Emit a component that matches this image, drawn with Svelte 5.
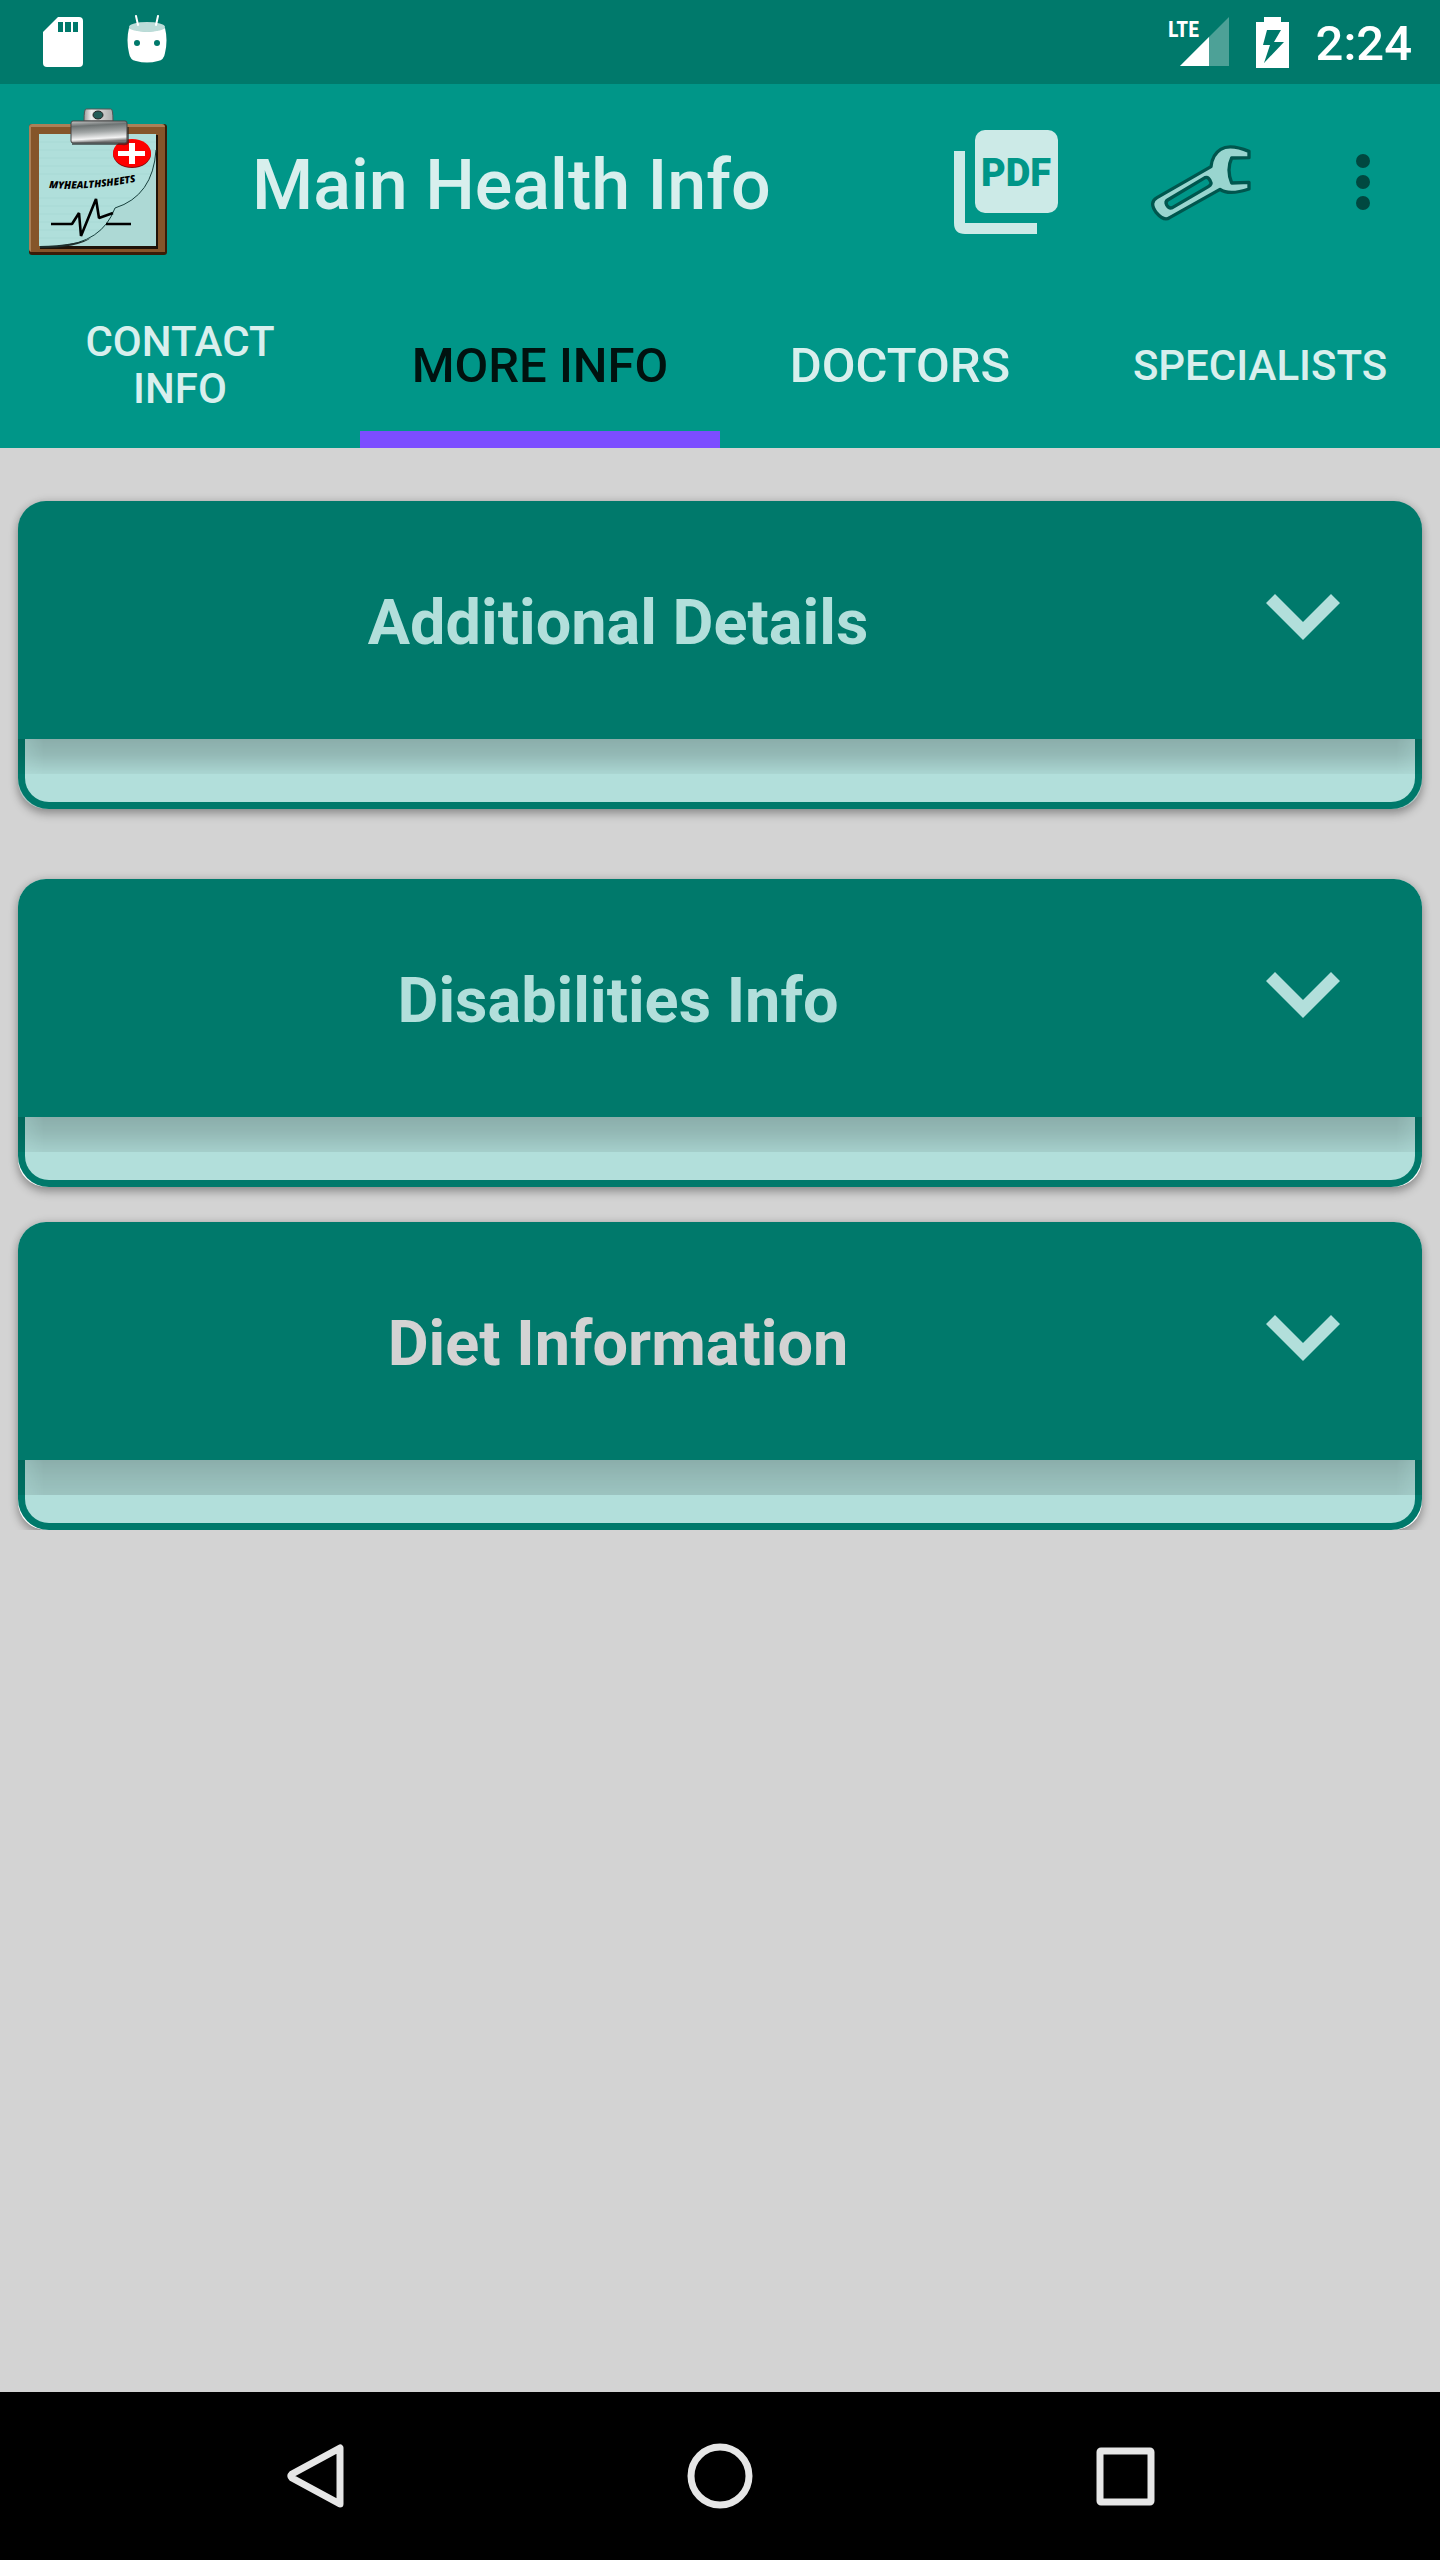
<script>
  let activeTab = $state('MORE INFO');
  const tabs = [
    { label: 'CONTACT INFO', compact: true },
    { label: 'MORE INFO', compact: false },
    { label: 'DOCTORS', compact: false },
    { label: 'SPECIALISTS', compact: true }
  ];
  const sections = [
    { title: 'Additional Details', tone: 'first' },
    { title: 'Disabilities Info', tone: 'second' },
    { title: 'Diet Information', tone: 'third' }
  ];
</script>

<div class="screen">
  <div class="status">
    <div class="group notices">
      <svg width="40" height="50" viewBox="0 0 40 50" aria-hidden="true">
        <path fill="#fff" d="M15 0H36Q40 0 40 4V46Q40 50 36 50H4Q0 50 0 46V15Z" />
        <path fill="#00796b" d="M15 5h5v10h-5zM22 5h6v10h-6zM30 5h5v10h-5z" />
      </svg>
      <svg width="40" height="54" viewBox="0 0 40 54" aria-hidden="true">
        <path fill="#fff" d="M2 13Q20 20 38 13Q41 25 38 38Q37 45 31 46Q20 49 9 46Q3 45 2 38Q-1 25 2 13Z" />
        <ellipse cx="20" cy="12" rx="18" ry="5" fill="#bcdcd8" />
        <path stroke="#fff" stroke-width="2" stroke-linecap="round" d="M9 1l2 9M31 1l-2 9" />
        <circle cx="10" cy="28" r="3" fill="#00796b" /><circle cx="30" cy="28" r="3" fill="#00796b" />
      </svg>
    </div>
    <div class="group system">
      <svg width="62" height="52" viewBox="-1 -1 62 52" aria-hidden="true">
        <path fill="#fff" fill-opacity=".3" d="M61 0V49H12Z" />
        <path fill="#fff" d="M41 20V49H12Z" />
        <text class="lte" x="0" y="20">LTE</text>
      </svg>
      <svg class="battery" width="33" height="51" viewBox="0 0 33 51" aria-hidden="true">
        <path fill="#fff" fill-rule="evenodd" d="M8 0H25V5H33V51H0V5H8ZM11 13L7 28H14L8 46L28 25H18L25 13Z" />
      </svg>
      <span class="clock">2:24</span>
    </div>
  </div>

  <header>
    <div class="appbar">
      <svg class="logo" width="142" height="150" viewBox="27 107 142 150" role="img" aria-label="MyHealthSheets">
        <defs>
          <linearGradient id="metal" x1="0" y1="0" x2="0.15" y2="1">
            <stop offset="0" stop-color="#c8c8c8" /><stop offset=".25" stop-color="#6d7373" />
            <stop offset=".55" stop-color="#a4a8a8" /><stop offset=".85" stop-color="#f4f4f4" /><stop offset="1" stop-color="#777" />
          </linearGradient>
          <linearGradient id="tab" x1="0" y1="0" x2="1" y2="0">
            <stop offset="0" stop-color="#999" /><stop offset=".25" stop-color="#eee" /><stop offset="1" stop-color="#aaa" />
          </linearGradient>
          <path id="arc" d="M49 188Q95 191 150 179" />
        </defs>
        <rect x="29" y="124" width="138" height="131" rx="3" fill="#3a1d08" />
        <rect x="29" y="124" width="136" height="128" rx="3" fill="#aa8058" />
        <rect x="31" y="127" width="134" height="125" fill="#85552a" />
        <rect x="40" y="135" width="118" height="114" fill="#1e1208" />
        <rect x="39" y="134" width="117" height="112" fill="#b0dfdb" />
        <path stroke="#9fcfcb" stroke-opacity=".35" d="M39 142H156M39 150H156M39 158H156M39 166H156M39 174H156M39 198H156M39 206H156M39 214H156M39 222H156M39 230H156M39 238H156" />
        <path fill="#add9d5" d="M156 150Q153 196 115 208Q102 243 58 246H156Z" />
        <path fill="none" stroke="#17403d" d="M156 150Q153 196 115 208Q102 243 58 246" />
        <path fill="#1d2d2b" d="M40 246Q76 245 91 238Q78 248 40 248Z" />
        <path fill="none" stroke="#000" stroke-width="2.6" stroke-linejoin="bevel" d="M51 224H72L79 213L81 236L96 199L99 218L113 213M106 224H131" />
        <ellipse cx="132" cy="154" rx="19" ry="14" fill="#870b0b" />
        <ellipse cx="132" cy="153" rx="19" ry="14" fill="#fe0000" />
        <path fill="#fff" d="M129 143h6v8h10v5h-10v8h-6v-8h-11v-5h11z" />
        <path fill="#222" fill-opacity=".6" d="M72 127H129V143Q127 146 122 145H72Z" />
        <path fill="url(#tab)" stroke="#555" d="M86 109H111Q113 109 113 121H84Q84 109 86 109Z" />
        <ellipse cx="98" cy="115" rx="5" ry="4" fill="#245c58" stroke="#222" />
        <rect x="71" y="121" width="56" height="22" rx="2" fill="url(#metal)" stroke="#444" />
        <text class="brand"><textPath href="#arc">MYHEALTHSHEETS</textPath></text>
      </svg>
      <h1>Main Health Info</h1>
      <button class="action" aria-label="PDF">
        <svg width="104" height="104" viewBox="0 0 104 104" aria-hidden="true">
          <path fill="#cceae7" d="M0 21H11V93H83V104H11Q0 104 0 93Z" />
          <rect x="21" y="0" width="83" height="83" rx="10" fill="#cceae7" />
          <text class="pdf" x="62" y="56" text-anchor="middle">PDF</text>
        </svg>
      </button>
      <button class="action" aria-label="Settings">
        <svg width="108" height="79" viewBox="693 126 324 237" aria-hidden="true">
          <g stroke="#00564e" stroke-width="10" stroke-linejoin="round">
            <path fill="#99d5cf" d="M714 290L876 197Q880 160 905 145Q933 128 990 151V170L938 171Q922 205 938 246L990 244V264Q930 284 903 265L752 350Q735 362 712 335Q689 304 714 290Z" />
            <path fill="#009688" d="M746 297L858 230Q868 226 874 240Q880 250 868 257L760 320Q750 324 743 312Q738 302 746 297Z" />
          </g>
        </svg>
      </button>
      <button class="more" aria-label="More options">
        <svg width="14" height="56" viewBox="0 0 14 56" fill="#004840" aria-hidden="true">
          <circle cx="7" cy="7" r="7" /><circle cx="7" cy="28" r="7" /><circle cx="7" cy="49" r="7" />
        </svg>
      </button>
    </div>
    <nav class="tabs" aria-label="Sections">
      {#each tabs as tab}
        <button class:compact={tab.compact} class:active={activeTab === tab.label} onclick={() => (activeTab = tab.label)}>
          <span>{tab.label}</span>
        </button>
      {/each}
    </nav>
  </header>

  <main>
    {#each sections as section}
      <section class="card {section.tone}">
        <button class="head">
          <span class="title">{section.title}</span>
          <svg width="74" height="52" viewBox="0 0 74 52" aria-hidden="true">
            <path fill="#b2dfdb" d="M9 0L37 28L65 0L74 9L37 46L0 9Z" />
          </svg>
        </button>
        <div class="body"></div>
      </section>
    {/each}
  </main>

  <footer>
    <button aria-label="Back">
      <svg width="66" height="66" viewBox="0 0 66 66" aria-hidden="true">
        <path d="M59 5V61L11 35Q9 33 11 31Z" />
      </svg>
    </button>
    <button aria-label="Home">
      <svg width="66" height="66" viewBox="0 0 66 66" aria-hidden="true"><circle cx="33" cy="33" r="29" /></svg>
    </button>
    <button aria-label="Recent apps">
      <svg width="66" height="66" viewBox="0 0 66 66" aria-hidden="true"><rect x="7" y="8" width="51" height="51" rx="1" /></svg>
    </button>
  </footer>
</div>

<style>
  :global(body) { margin: 0; }
  .screen {
    display: flex;
    flex-direction: column;
    min-height: 100vh;
    background: #d3d3d3;
    font-family: Roboto, "Noto Sans", sans-serif;
  }
  button {
    margin: 0;
    padding: 0;
    border: 0;
    background: none;
    font: inherit;
    color: inherit;
    cursor: pointer;
  }
  svg { display: block; flex: none; }

  .status {
    display: flex;
    justify-content: space-between;
    height: 84px;
    padding: 0 28px 0 43px;
    background: #00796b;
    color: #fff;
  }
  .group { display: flex; align-items: center; }
  .notices { gap: 44px; }
  .system { gap: 27px; }
  .clock { padding-top: 4px; font-size: 49px; font-weight: 500; line-height: 80px; }
  .lte { font: 700 22px "Roboto Condensed", "Liberation Sans Narrow", Roboto, sans-serif; fill: #fff; }

  header { background: #009688; }
  .appbar { display: flex; align-items: center; height: 196px; padding: 0 17px 0 27px; }
  h1 {
    flex: 1;
    margin: 0 0 0 83px;
    padding-top: 5px;
    color: #d8efed;
    font-size: 70px;
    font-weight: 500;
    line-height: 84px;
  }
  .action, .more { display: flex; align-items: center; justify-content: center; height: 100%; }
  .action { width: 198px; }
  .more { width: 120px; }
  .brand { font: italic 800 10px "Open Sans", sans-serif; fill: #000; }
  .pdf { font: 900 38px Roboto, sans-serif; fill: #009688; }

  .tabs { display: grid; grid-template-columns: repeat(4, 1fr); height: 168px; }
  .tabs button {
    display: flex;
    align-items: center;
    justify-content: center;
    padding: 4px 42px 0;
    color: #d8efed;
    font-size: 49px;
    font-weight: 500;
    line-height: 56px;
    box-sizing: border-box;
    white-space: nowrap;
  }
  .tabs .compact { padding-top: 2px; font-size: 42px; line-height: 47px; white-space: normal; }
  .tabs .active { color: #00120f; box-shadow: inset 0 -17px #7c4dff; }

  main { flex: 1; padding: 53px 18px; }
  .card {
    border-radius: 28px;
    background: #fff;
    box-shadow: 0 5px 10px rgba(0, 0, 0, 0.28), 0 0 8px rgba(0, 0, 0, 0.14);
  }
  .first { background: #b2c8c6; }
  .second { margin: 70px 0 35px; }
  .third { clip-path: inset(-20px -20px 0); }
  .head {
    display: flex;
    align-items: center;
    width: 100%;
    height: 238px;
    padding-right: 82px;
    border-radius: 28px 28px 0 0;
    background: #00796b;
    color: #b2dfdb;
    box-sizing: border-box;
  }
  .title { flex: 1; padding: 6px 48px 0 0; font-size: 63px; font-weight: 700; line-height: 74px; }
  .third .title { color: #d3d3d3; }
  .body {
    position: relative;
    height: 70px;
    border: 7px solid #00796b;
    border-top: 0;
    border-radius: 0 0 31px 31px;
    background: #b2dfdb;
    box-sizing: border-box;
  }
  .body::before {
    content: "";
    position: absolute;
    inset: 0 -7px auto;
    height: 35px;
    --fade: rgba(0, 0, 0, 0.04);
    background: linear-gradient(rgba(0, 0, 0, 0.22), rgba(0, 0, 0, 0.17) 45%, var(--fade));
    mask-image: linear-gradient(90deg, rgba(0, 0, 0, 0.6), #000 26px, #000 calc(100% - 26px), rgba(0, 0, 0, 0.6));
  }
  .second .body::before { --fade: rgba(0, 0, 0, 0.07); }
  .third .body::before { --fade: rgba(0, 0, 0, 0.12); }

  footer { display: flex; height: 168px; padding: 0 111px; background: #000; }
  footer button { display: flex; flex: 1; align-items: center; justify-content: center; }
  footer svg { fill: none; stroke: #e6e6e6; stroke-width: 7; stroke-linejoin: round; }
</style>
